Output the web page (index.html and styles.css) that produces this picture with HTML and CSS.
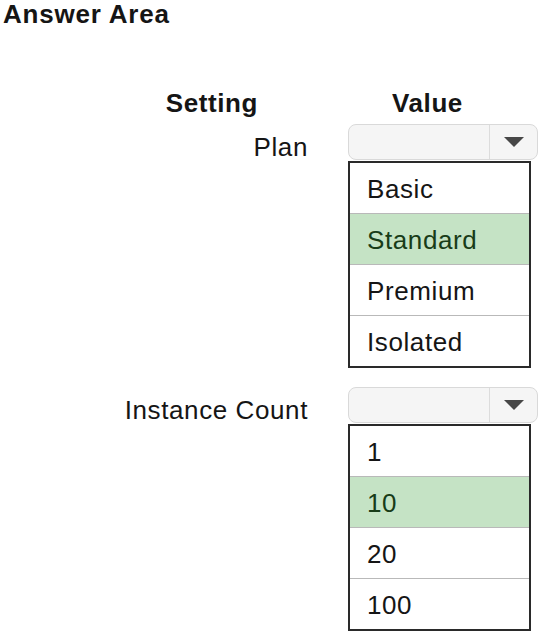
FILE: index.html
```html
<!DOCTYPE html>
<html lang="en">
<head>
    <meta charset="UTF-8">
    <meta name="viewport" content="width=device-width, initial-scale=1.0">
    <title>Answer Area</title>
    <link rel="stylesheet" href="styles.css">
</head>
<body>
    <h1 class="title">Answer Area</h1>
    <div class="answer">
        <div class="row head">
            <div class="label">Setting</div>
            <div class="value">Value</div>
        </div>
        <div class="row">
            <div class="label field-label">Plan</div>
            <div class="value">
                <div class="select">
                    <div class="select-box"></div>
                    <div class="select-arrow"><span class="tri"></span></div>
                </div>
                <ul class="options">
                    <li>Basic</li>
                    <li class="picked">Standard</li>
                    <li>Premium</li>
                    <li>Isolated</li>
                </ul>
            </div>
        </div>
        <div class="row second">
            <div class="label field-label">Instance Count</div>
            <div class="value">
                <div class="select">
                    <div class="select-box"></div>
                    <div class="select-arrow"><span class="tri"></span></div>
                </div>
                <ul class="options">
                    <li>1</li>
                    <li class="picked">10</li>
                    <li>20</li>
                    <li>100</li>
                </ul>
            </div>
        </div>
    </div>
</body>
</html>
```

FILE: styles.css
```css
body{
    margin: 0;
    font-family: "Liberation Sans", Arial, Helvetica, sans-serif;
    color: #151515;
    background: #fff;
}
.title{
    margin: 0;
    padding-left: 3px;
    font-size: 26px;
    line-height: 28px;
    letter-spacing: 0.8px;
    font-weight: bold;
}
.answer{
    margin-top: 58px;
}
.row{
    display: grid;
    grid-template-columns: 308px 190px;
    column-gap: 40px;
}
.label{
    text-align: right;
    font-size: 26px;
    letter-spacing: 0.6px;
}
.head{
    font-weight: bold;
    font-size: 26px;
    letter-spacing: 0.6px;
    line-height: 34px;
    margin-bottom: 2px;
}
.head .label{
    padding-right: 50px;
    font-weight: bold;
}
.head .value{
    padding-left: 44px;
}
.field-label{
    padding-top: 10px;
    line-height: 30px;
}
.second{
    margin-top: 17px;
}
.select{
    display: flex;
    height: 34px;
    margin-top: 2px;
    border: 1px solid #d9d9d9;
    border-radius: 8px;
    background: #f5f5f5;
}
.select-box{
    flex: 1;
}
.select-arrow{
    width: 47px;
    border-left: 1px solid #dcdcdc;
    display: flex;
    align-items: center;
    justify-content: center;
}
.tri{
    width: 0;
    height: 0;
    border-left: 10px solid transparent;
    border-right: 10px solid transparent;
    border-top: 10px solid #474747;
}
.options{
    list-style: none;
    margin: 1px 0 0 0;
    padding: 0;
    width: 183px;
    box-sizing: border-box;
    border: 2px solid #2a2a2a;
}
.options li{
    height: 50px;
    display: flex;
    align-items: center;
    padding: 3px 0 0 17px;
    box-sizing: border-box;
    font-size: 26px;
    letter-spacing: 0.6px;
}
.options li + li{
    height: 51px;
    border-top: 1px solid #b9b9b9;
}
.options .picked{
    background: #c5e3c5;
    color: #183c18;
}
```
